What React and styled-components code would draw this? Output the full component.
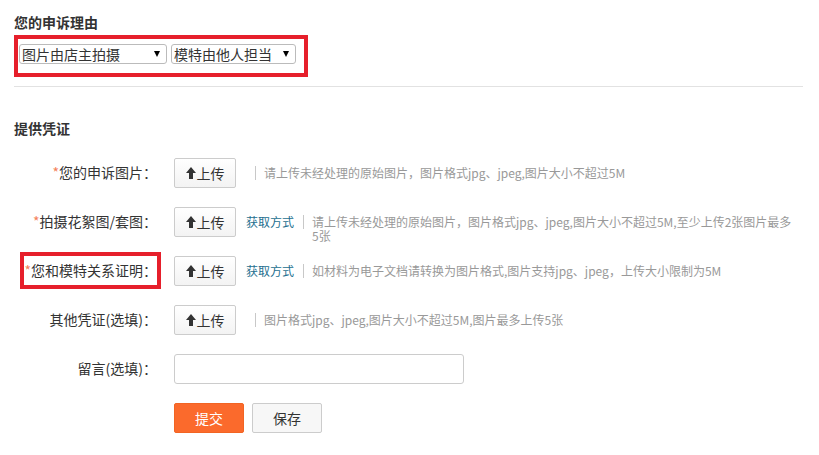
import React from 'react';
import styled, { createGlobalStyle } from 'styled-components';

const GlobalStyle = createGlobalStyle`
  body {
    margin: 0;
    background: #fff;
    font-family: "Noto Sans CJK SC", "Liberation Sans", sans-serif;
    color: #333;
  }
`;

const rows = [
  {
    label: '您的申诉图片',
    required: true,
    hint: '请上传未经处理的原始图片，图片格式jpg、jpeg,图片大小不超过5M',
  },
  {
    label: '拍摄花絮图/套图',
    required: true,
    link: true,
    // word joiner keeps "5张" together when the line wraps
    hint: '请上传未经处理的原始图片，图片格式jpg、jpeg,图片大小不超过5M,至少上传2张图片最多5\u2060张',
  },
  {
    label: '您和模特关系证明',
    required: true,
    link: true,
    marked: true,
    hint: '如材料为电子文档请转换为图片格式,图片支持jpg、jpeg，上传大小限制为5M',
  },
  {
    label: '其他凭证(选填)',
    hint: '图片格式jpg、jpeg,图片大小不超过5M,图片最多上传5张',
  },
];

const UpArrow = () => (
  <svg width="10" height="12" viewBox="0 0 10 12">
    <path d="M5 0 L10 6 L7 6 L7 12 L3 12 L3 6 L0 6 Z" fill="#333" />
  </svg>
);

const App = () => {
  return (
    <Page>
      <GlobalStyle />
      <SectionTitle>您的申诉理由</SectionTitle>
      <ReasonBox>
        <FakeSelect width={148}>
          <span>图片由店主拍摄</span>
          <Caret />
        </FakeSelect>
        <FakeSelect width={125}>
          <span>模特由他人担当</span>
          <Caret />
        </FakeSelect>
      </ReasonBox>
      <Divider />

      <SectionTitle spaced>提供凭证</SectionTitle>
      <Form>
        {rows.map((r) => (
          <Row key={r.label}>
            <LabelCell>
              <LabelText marked={r.marked}>
                {r.required && <Star>*</Star>}
                {r.label}：
              </LabelText>
            </LabelCell>
            <UploadButton>
              <UpArrow />
              上传
            </UploadButton>
            <Hint>
              {r.link && <HowLink>获取方式</HowLink>}
              <Sep />
              <HintText>{r.hint}</HintText>
            </Hint>
          </Row>
        ))}
        <Row>
          <LabelCell>
            <LabelText>留言(选填)：</LabelText>
          </LabelCell>
          <Message />
        </Row>
        <Row>
          <LabelCell />
          <SubmitButton>提交</SubmitButton>
          <SaveButton>保存</SaveButton>
        </Row>
      </Form>
    </Page>
  );
};

const Page = styled.div`
  width: 789px;
  padding: 12px 0 20px 14px;
`;

const SectionTitle = styled.h3`
  margin: ${(p) => (p.spaced ? '31px' : '0')} 0 0;
  font-size: 14px;
  line-height: 20px;
  font-weight: bold;
  color: #333;
`;

const ReasonBox = styled.div`
  display: flex;
  gap: 4px;
  width: 294px;
  box-sizing: border-box;
  margin-top: 3px;
  padding: 5px 7px 9px 1px;
  border: 4px solid #e61f2b;
`;

const FakeSelect = styled.div`
  width: ${(p) => p.width}px;
  height: 20px;
  box-sizing: border-box;
  display: flex;
  align-items: center;
  justify-content: space-between;
  padding: 0 6px 0 2px;
  border: 1px solid #bbb;
  border-radius: 3px;
  background: #fff;
  font-size: 14px;
  line-height: 18px;
  color: #333;
`;

const Caret = styled.i`
  width: 0;
  height: 0;
  border-left: 3px solid transparent;
  border-right: 3px solid transparent;
  border-top: 6px solid #000;
`;

const Divider = styled.div`
  margin-top: 9px;
  height: 1px;
  background: #e2e2e2;
`;

const Form = styled.div`
  display: flex;
  flex-direction: column;
  gap: 19px;
  margin-top: 20px;
`;

const Row = styled.div`
  display: flex;
  align-items: flex-start;
  height: 30px;
`;

const LabelCell = styled.div`
  width: 143px;
  flex-shrink: 0;
  margin-right: 17px;
  text-align: right;
`;

const LabelText = styled.span`
  display: inline-block;
  font-size: 14px;
  line-height: 29px;
  color: #333;
  outline: ${(p) => (p.marked ? '4px solid #e61f2b' : 'none')};
  outline-offset: 0;
`;

const Star = styled.span`
  color: #f4805a;
`;

const UploadButton = styled.button`
  width: 62px;
  height: 30px;
  flex-shrink: 0;
  display: flex;
  align-items: center;
  justify-content: center;
  gap: 1px;
  padding: 0;
  border: 1px solid #ccc;
  border-radius: 2px;
  background: linear-gradient(#fff, #f3f3f3);
  font-family: inherit;
  font-size: 14px;
  color: #333;
`;

const Hint = styled.div`
  flex: 1;
  display: flex;
  align-items: flex-start;
  margin-left: 10px;
  padding-top: 8px;
  font-size: 12px;
  line-height: 14px;
`;

const HowLink = styled.a`
  color: #256f8f;
  white-space: nowrap;
`;

const Sep = styled.span`
  flex-shrink: 0;
  width: 0;
  height: 14px;
  margin: 0 8px 0 9px;
  border-left: 1px solid #c8c8c8;
`;

const HintText = styled.span`
  flex: 1;
  color: #999;
`;

const Message = styled.textarea`
  width: 290px;
  height: 30px;
  box-sizing: border-box;
  border: 1px solid #ccc;
  border-radius: 3px;
  resize: none;
  font-family: inherit;
`;

const BaseButton = styled.button`
  width: 70px;
  height: 30px;
  box-sizing: border-box;
  border-radius: 2px;
  font-family: inherit;
  font-size: 14px;
`;

const SubmitButton = styled(BaseButton)`
  border: 1px solid #f26423;
  background: #fb6a2c;
  color: #fff;
`;

const SaveButton = styled(BaseButton)`
  margin-left: 8px;
  border: 1px solid #ccc;
  background: #f7f7f7;
  color: #333;
`;

export default App;
